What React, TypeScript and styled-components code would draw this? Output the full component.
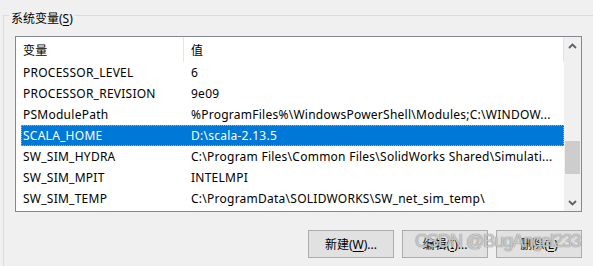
import styled, { createGlobalStyle } from 'styled-components'

const GlobalStyle = createGlobalStyle`
  html, body {
    margin: 0;
    padding: 0;
    background: #f0f0f0;
  }
  body {
    font-family: "Segoe UI", "Noto Sans", "Noto Sans CJK SC", sans-serif;
    font-size: 12px;
    color: #000;
  }
`

const Window = styled.div`
  position: relative;
  width: 593px;
  height: 266px;
  overflow: hidden;
  padding-top: 4px;
  box-sizing: border-box;
`

const GroupBox = styled.fieldset`
  margin: 0 0 0 3px;
  width: 640px;
  border: 1px solid #dcdcdc;
  padding: 9px 0 30px 11px;
  box-sizing: border-box;
`

const Legend = styled.legend`
  margin-left: -6px;
  padding: 7px 2px 0;
  line-height: 16px;
`

const Key = styled.span`
  text-decoration: underline;
  text-underline-offset: 2px;
`

const ListBox = styled.div`
  width: 567px;
  height: 176px;
  box-sizing: border-box;
  border: 1px solid #828790;
  background: #fff;
  display: flex;
`

const ListArea = styled.div`
  flex: 1;
  display: flex;
  flex-direction: column;
  min-width: 0;
  letter-spacing: 0.25px;
`

const Header = styled.div`
  height: 25px;
  display: flex;
  align-items: stretch;
  flex-shrink: 0;
`

const HeaderCell = styled.div<{ $width?: number }>`
  ${(p) => (p.$width ? `width: ${p.$width}px;` : 'flex: 1;')}
  padding-left: 7px;
  display: flex;
  align-items: center;
  border-right: 1px solid #e5e5e5;
  box-sizing: border-box;
`

const Row = styled.div<{ $selected?: boolean }>`
  height: 21px;
  margin-left: 5px;
  display: flex;
  align-items: center;
  background: ${(p) => (p.$selected ? '#0078d7' : 'transparent')};
  color: ${(p) => (p.$selected ? '#fff' : '#000')};
  outline: ${(p) => (p.$selected ? '1px dotted #f2a13a' : 'none')};
  outline-offset: -1px;
  flex-shrink: 0;
`

const Cell = styled.div<{ $width?: number }>`
  ${(p) => (p.$width ? `width: ${p.$width}px;` : 'flex: 1;')}
  padding-left: 2px;
  white-space: nowrap;
  overflow: hidden;
  text-overflow: ellipsis;
  box-sizing: border-box;
`

const ScrollBar = styled.div`
  width: 17px;
  background: #f0f0f0;
  display: flex;
  flex-direction: column;
`

const ArrowBox = styled.div`
  height: 17px;
  display: flex;
  align-items: center;
  justify-content: center;
`

const Track = styled.div`
  flex: 1;
  display: flex;
  flex-direction: column;
  padding: 87px 1px 0 1px;
`

const Thumb = styled.div`
  height: 33px;
  background: #cdcdcd;
`

const ButtonRow = styled.div`
  width: 567px;
  margin-top: 18px;
  display: flex;
  justify-content: flex-end;
  gap: 8px;
`

const Button = styled.button`
  width: 86px;
  height: 28px;
  border: 1px solid #adadad;
  background: #e1e1e1;
  font: inherit;
  color: #000;
  padding: 0;
`

const Watermark = styled.div`
  position: absolute;
  left: 415px;
  top: 228px;
  white-space: nowrap;
  font-family: "Liberation Sans", Arial, sans-serif;
  font-size: 18px;
  letter-spacing: -1px;
  line-height: 26px;
  color: rgba(255, 255, 255, 0.6);
  text-shadow: 0 0 1px rgba(110, 110, 110, 0.75), 0 0 1px rgba(110, 110, 110, 0.75);
  pointer-events: none;
`

const vars: Array<{ name: string; value: string }> = [
  { name: 'PROCESSOR_LEVEL', value: '6' },
  { name: 'PROCESSOR_REVISION', value: '9e09' },
  { name: 'PSModulePath', value: '%ProgramFiles%\\WindowsPowerShell\\Modules;C:\\WINDOW...' },
  { name: 'SCALA_HOME', value: 'D:\\scala-2.13.5' },
  { name: 'SW_SIM_HYDRA', value: 'C:\\Program Files\\Common Files\\SolidWorks Shared\\Simulati...' },
  { name: 'SW_SIM_MPIT', value: 'INTELMPI' },
  { name: 'SW_SIM_TEMP', value: 'C:\\ProgramData\\SOLIDWORKS\\SW_net_sim_temp\\' },
]

const Chevron = ({ up }: { up?: boolean }) => (
  <svg width="9" height="6" viewBox="0 0 9 6">
    <path
      d={up ? 'M1 5 L4.5 1.5 L8 5' : 'M1 1 L4.5 4.5 L8 1'}
      fill="none"
      stroke="#606060"
      strokeWidth="1.8"
    />
  </svg>
)

export default function App() {
  return (
    <Window>
      <GlobalStyle />
      <GroupBox>
        <Legend>
          系统变量(<Key>S</Key>)
        </Legend>
        <ListBox>
          <ListArea>
            <Header>
              <HeaderCell $width={168}>变量</HeaderCell>
              <HeaderCell>值</HeaderCell>
            </Header>
            {vars.map((v) => (
              <Row key={v.name} $selected={v.name === 'SCALA_HOME'}>
                <Cell $width={168}>{v.name}</Cell>
                <Cell>{v.value}</Cell>
              </Row>
            ))}
          </ListArea>
          <ScrollBar>
            <ArrowBox>
              <Chevron up />
            </ArrowBox>
            <Track>
              <Thumb />
            </Track>
            <ArrowBox>
              <Chevron />
            </ArrowBox>
          </ScrollBar>
        </ListBox>
        <ButtonRow>
          <Button>
            新建(<Key>W</Key>)...
          </Button>
          <Button>
            编辑(<Key>I</Key>)...
          </Button>
          <Button>
            删除(<Key>L</Key>)
          </Button>
        </ButtonRow>
      </GroupBox>
      <Watermark>CSDN @BugAngel233</Watermark>
    </Window>
  )
}
